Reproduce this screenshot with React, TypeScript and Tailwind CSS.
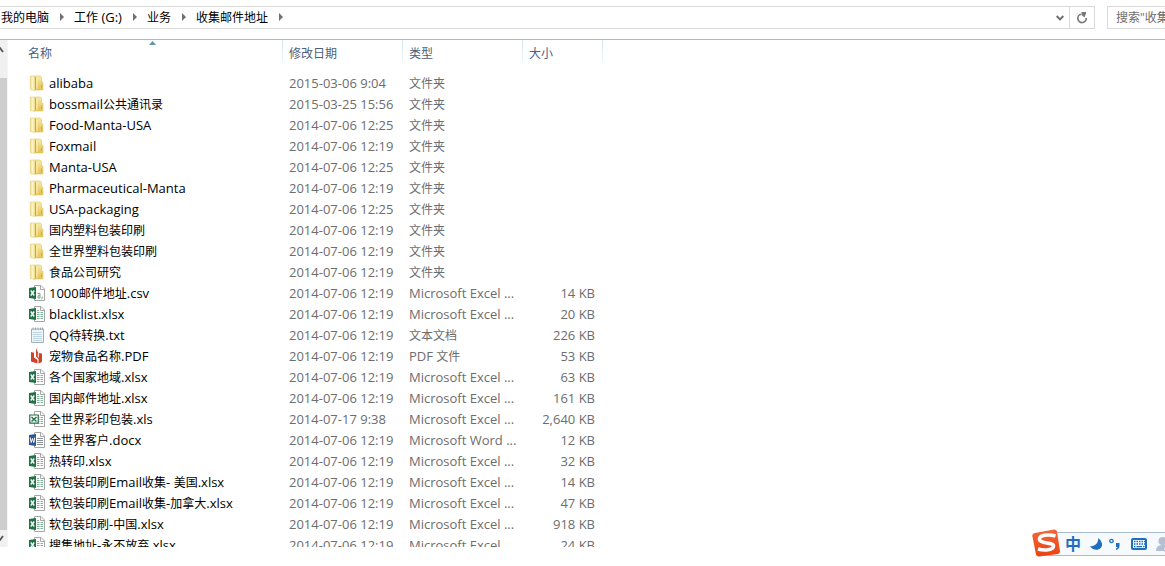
import * as React from 'react'

type Kind = 'folder' | 'csv' | 'xlsx' | 'xls' | 'docx' | 'txt' | 'pdf'

interface Entry {
  name: string
  date: string
  type: string
  size?: string
  kind: Kind
}

const folder = (name: string, date: string): Entry => ({ name, date, type: '文件夹', kind: 'folder' })
const excel = (name: string, size: string, date = '2014-07-06 12:19', kind: Kind = 'xlsx'): Entry => ({
  name,
  date,
  type: 'Microsoft Excel ...',
  size,
  kind,
})

const entries: Entry[] = [
  folder('alibaba', '2015-03-06 9:04'),
  folder('bossmail公共通讯录', '2015-03-25 15:56'),
  folder('Food-Manta-USA', '2014-07-06 12:25'),
  folder('Foxmail', '2014-07-06 12:19'),
  folder('Manta-USA', '2014-07-06 12:25'),
  folder('Pharmaceutical-Manta', '2014-07-06 12:19'),
  folder('USA-packaging', '2014-07-06 12:25'),
  folder('国内塑料包装印刷', '2014-07-06 12:19'),
  folder('全世界塑料包装印刷', '2014-07-06 12:19'),
  folder('食品公司研究', '2014-07-06 12:19'),
  excel('1000邮件地址.csv', '14 KB', '2014-07-06 12:19', 'csv'),
  excel('blacklist.xlsx', '20 KB'),
  { name: 'QQ待转换.txt', date: '2014-07-06 12:19', type: '文本文档', size: '226 KB', kind: 'txt' },
  { name: '宠物食品名称.PDF', date: '2014-07-06 12:19', type: 'PDF 文件', size: '53 KB', kind: 'pdf' },
  excel('各个国家地域.xlsx', '63 KB'),
  excel('国内邮件地址.xlsx', '161 KB'),
  excel('全世界彩印包装.xls', '2,640 KB', '2014-07-17 9:38', 'xls'),
  { name: '全世界客户.docx', date: '2014-07-06 12:19', type: 'Microsoft Word ...', size: '12 KB', kind: 'docx' },
  excel('热转印.xlsx', '32 KB'),
  excel('软包装印刷Email收集- 美国.xlsx', '14 KB'),
  excel('软包装印刷Email收集-加拿大.xlsx', '47 KB'),
  excel('软包装印刷-中国.xlsx', '918 KB'),
  excel('搜集地址-永不放弃.xlsx', '24 KB'),
]

// Chinese runs are set one size smaller than the Latin ones
function Label({ text }: { text: string }) {
  return (
    <>
      {text.split(/([\u4e00-\u9fff]+)/).map((part, i) =>
        i % 2 ? <span key={i} className="text-xs leading-none">{part}</span> : part
      )}
    </>
  )
}

function FileIcon({ kind }: { kind: Kind }) {
  if (kind === 'folder') {
    return (
      <svg width="16" height="16" viewBox="0 0 16 16" className="shrink-0" aria-hidden="true">
        <defs>
          <linearGradient id="folderFront" x1="0" x2="1">
            <stop offset="0" stopColor="#f3dd86" />
            <stop offset=".5" stopColor="#fdf6c4" />
            <stop offset="1" stopColor="#f3df8d" />
          </linearGradient>
          <linearGradient id="folderBack" x1="0" x2="0" y1="0" y2="1">
            <stop offset="0" stopColor="#f8eaa6" />
            <stop offset="1" stopColor="#e3c052" />
          </linearGradient>
        </defs>
        <path d="M6 1h5.500l1 1.500V7H14v8H6z" fill="url(#folderBack)" stroke="#e0c66c" strokeWidth=".6" />
        <path d="M1.300 1H6v14.500L1.300 14.500z" fill="url(#folderFront)" stroke="#e2cb78" strokeWidth=".6" />
        <path d="M6.500 2v12.500" stroke="#c9a94b" strokeWidth="1" />
        <path d="M8 2.500v11.500" stroke="#fbf2bd" strokeWidth="1" />
        <path d="M12.500 9.500v3.500" stroke="#7fb9d6" strokeWidth="1" />
      </svg>
    )
  }
  if (kind === 'txt') {
    return (
      <svg width="16" height="16" viewBox="0 0 16 16" className="shrink-0" aria-hidden="true">
        <path d="M2.500 2h12v13.500h-12z" fill="#eef5fa" stroke="#a3afb8" />
        <path d="M4 5.500h9M4 7.500h9M4 9.500h9M4 11.500h9M4 13.500h9" stroke="#bfd6e4" />
        <path d="M4 .5v2.500M6.500.5v2.500M9 .5v2.500M11.500.5v2.500M13.500.5v2.500" stroke="#90999f" strokeWidth=".8" />
      </svg>
    )
  }
  if (kind === 'pdf') {
    return (
      <svg width="16" height="16" viewBox="0 0 16 16" className="shrink-0" aria-hidden="true">
        <path d="M2 4l3 .8v4.700L8.500 12v3.500L2 13.500z" fill="#d1422b" />
        <path d="M7 0l1.500 3.500L9.500 5l3.500.5V14l-3.500 1.500V11L7 8.500z" fill="#d1422b" />
        <path d="M9.300 5v4.500" stroke="#fff" strokeWidth="1" />
      </svg>
    )
  }
  const word = kind === 'docx'
  const tint = word ? '#2b579a' : '#217346'
  return (
    <svg width="16" height="16" viewBox="0 0 16 16" className="shrink-0" aria-hidden="true">
      <path d="M5.500.5H12L15.500 4v11.500h-10z" fill="#fff" stroke="#a6a6a6" />
      <path d="M11.500.5v4h4" fill="none" stroke="#a6a6a6" />
      {kind === 'csv' ? (
        <path d="M8.500 8.500h2.500v4.500H9v-2.300h2M13.300 11.500V13l-.8 1.200" fill="none" stroke="#5da37c" strokeWidth=".9" />
      ) : word ? (
        <path d="M8 6.500h6M8 8.500h6M8 10.500h6M8 12.500h6" stroke="#8a9099" />
      ) : (
        <path d="M8 4.500h2M8 6.500h2.500M8 8.500h2.500M8 10.500h2.500M8 12.500h2.500M11.500 6.500H14M11.500 8.500H14M11.500 10.500H14M11.500 12.500H14" stroke="#7db594" />
      )}
      {kind === 'xls' ? (
        <>
          <path d="M.8 4h8.400v8.200H.8z" fill="#fff" stroke={tint} strokeWidth="1.200" />
          <path d="M2.500 6l5 4.500M7.500 6l-5 4.500" stroke={tint} strokeWidth="1.500" />
        </>
      ) : (
        <>
          <path d="M0 3l7-1v12l-7-1z" fill={tint} />
          {word ? (
            <path d="M1.200 5.500l1 5 1.300-4 1.300 4 1-5" fill="none" stroke="#fff" />
          ) : (
            <path d="M1.800 5.500l3.400 5M5.200 5.500l-3.400 5" stroke="#fff" strokeWidth="1.400" />
          )}
        </>
      )}
    </svg>
  )
}

function Crumb({ text }: { text: string }) {
  return (
    <li className="flex items-center">
      <a href="#" className="whitespace-nowrap"><Label text={text} /></a>
      <svg width="4" height="8" viewBox="0 0 4 8" className="mr-2.5 ml-[11px]" aria-hidden="true">
        <path d="M0 0l4 4-4 4z" fill="#707070" />
      </svg>
    </li>
  )
}

function AddressBar() {
  return (
    <header className="flex h-10 shrink-0 items-start gap-3 overflow-hidden border-b border-[#b4b7b9] pt-[6px]">
      <div className="flex h-[23px] min-w-0 flex-1 border-y border-r border-[#d9d9d9]">
        <nav className="min-w-0 flex-1" aria-label="地址">
          <ol className="flex h-5 items-center pl-px">
            {['我的电脑', '工作 (G:)', '业务', '收集邮件地址'].map((c) => <Crumb key={c} text={c} />)}
          </ol>
        </nav>
        <button aria-label="以前的位置" className="flex w-[18px] items-center justify-center">
          <svg width="8" height="6" viewBox="0 0 8 6"><path d="M.7 1L4 4.300 7.300 1" fill="none" stroke="#6b6b6b" strokeWidth="1.900" /></svg>
        </button>
        <button aria-label="刷新" className="flex w-[25px] items-center justify-center border-l border-[#d9d9d9]">
          <svg width="12" height="12" viewBox="0 0 12 12">
            <path d="M5 2.300A4.200 4.200 0 1 0 10.200 6" fill="none" stroke="#7a7a7a" strokeWidth="1.700" />
            <path d="M5.500 0H10v1.500L8.500 5.500 5.500 3z" fill="#7a7a7a" />
          </svg>
        </button>
      </div>
      <div className="h-[23px] w-[58px] shrink-0 overflow-hidden border-y border-l border-[#d9d9d9]">
        <input
          type="search"
          aria-label="搜索"
          placeholder={'搜索"收集邮件地址"'}
          className="h-full w-40 pl-2 text-xs outline-none placeholder:text-[#6d6d6d]"
        />
      </div>
    </header>
  )
}

function ScrollBar() {
  return (
    <div className="flex w-[7px] shrink-0 flex-col bg-[#f0f0f0]">
      <div className="flex h-[38px] pt-[7px]">
        <svg width="4" height="6" viewBox="0 0 4 6"><path d="M-3 5l3-4 3 4" fill="none" stroke="#555" strokeWidth="1.800" /></svg>
      </div>
      <div className="flex-1 bg-[#cdcdcd]" />
      <div className="flex h-[17px] pt-[5px]">
        <svg width="4" height="6" viewBox="0 0 4 6"><path d="M-3 1l3 4 3-4" fill="none" stroke="#555" strokeWidth="1.800" /></svg>
      </div>
    </div>
  )
}

function HeadCell({ text, first }: { text: string; first?: boolean }) {
  return (
    <th className="relative h-8 p-0 text-left align-top text-xs font-normal text-[#4c607a]">
      <button className={first ? 'pl-5 leading-7' : 'pl-[6px] leading-7'}>{text}</button>
      {first && (
        <svg width="7" height="4" viewBox="0 0 7 4" className="absolute top-px left-[141px]" aria-hidden="true">
          <path d="M3.500 0L7 4H0z" fill="#5d93b2" />
        </svg>
      )}
      <span className="absolute top-0 right-0 h-[22px] w-px bg-linear-to-b from-[#d3e4f3] to-[#f2f7fb]" />
    </th>
  )
}

function FileTable() {
  return (
    <table className="w-[595px] table-fixed border-collapse">
      <colgroup>
        <col className="w-[275px]" />
        <col className="w-[120px]" />
        <col className="w-[120px]" />
        <col className="w-20" />
      </colgroup>
      <thead>
        <tr>
          <HeadCell text="名称" first />
          <HeadCell text="修改日期" />
          <HeadCell text="类型" />
          <HeadCell text="大小" />
        </tr>
      </thead>
      <tbody className="text-[#6d6d6d]">
        {entries.map((e) => (
          <tr key={e.name} className="h-[21px] whitespace-nowrap">
            <td className="p-0">
              <div className="flex h-[21px] items-center gap-1 pl-[21px] text-black">
                <FileIcon kind={e.kind} />
                <span><Label text={e.name} /></span>
              </div>
            </td>
            <td className="p-0 pl-[6px]">{e.date}</td>
            <td className="p-0 pl-[6px]"><Label text={e.type} /></td>
            <td className="p-0 pr-2 text-right">{e.size}</td>
          </tr>
        ))}
      </tbody>
    </table>
  )
}

// Input method toolbar floating over the window's lower right corner
function ImeBar() {
  return (
    <div className="absolute right-0 bottom-[9px] h-7 w-[133px] overflow-hidden">
      <div className="absolute inset-x-0 top-[3px] left-3 flex h-6 items-center gap-2 border-y border-[#a9bccd] bg-[#f7fafd] pl-[21px] text-[#1f6fc0]">
        <button aria-label="中文输入" className="w-4 text-center text-base leading-5 font-bold">中</button>
        <svg width="92" height="22" viewBox="0 0 92 22" className="shrink-0" aria-hidden="true">
          <path d="M9 5c1 5-3 8-8 8.500 5 6 13 3 12-3Q12 6.500 9 5z" fill="#1f6fc0" />
          <circle cx="22.500" cy="8" r="1.700" fill="none" stroke="#1f6fc0" strokeWidth="1.300" />
          <path d="M27 10h3.500v3q0 3-3.500 4v-1.500q1.500-.5 1.500-1.500H27z" fill="#1f6fc0" />
          <rect x="43" y="6" width="14" height="10" rx="1" fill="none" stroke="#1f6fc0" strokeWidth="2" />
          <path d="M45 8.500h11M45 11h11" stroke="#1f6fc0" strokeWidth="1.300" strokeDasharray="1.500 1" />
          <path d="M45 13.700h1.500M47.500 13.700h5.500M54 13.700h1.500" stroke="#1f6fc0" strokeWidth="1.300" />
          <circle cx="73.500" cy="8" r="4" fill="#b3c0d3" />
          <path d="M67 18q0-6 6-6h8v6z" fill="#b3c0d3" />
          <path d="M75 14h5v4h-5z" fill="#f7fafd" stroke="#b3c0d3" />
        </svg>
      </div>
      <svg width="28" height="28" viewBox="0 0 28 28" className="relative" aria-hidden="true">
        <defs>
          <linearGradient id="ime" x1="0" x2="0" y1="0" y2="1">
            <stop offset="0" stopColor="#f4673a" />
            <stop offset="1" stopColor="#ea4312" />
          </linearGradient>
        </defs>
        <path d="M3 4L22 .5Q24.500.2 25 2.500L28 22q.2 2.500-2 3L7 27.500q-2.500.2-3-2L.3 7Q0 4.500 3 4z" fill="url(#ime)" />
        <path d="M23.500 7C16 5 7 6 7.500 10.500c.5 4.500 14 2.500 14 6.500 0 4-9 5-15.500 3" fill="none" stroke="#fff" strokeWidth="3.600" />
      </svg>
    </div>
  )
}

export default function App() {
  return (
    <div className="relative flex h-screen flex-col overflow-hidden bg-white pb-[19px] font-['Open_Sans','Noto_Sans_CJK_SC',sans-serif] text-[13px] leading-4 text-black">
      <AddressBar />
      <main className="flex min-h-0 flex-1">
        <ScrollBar />
        <div className="min-w-0 flex-1 overflow-hidden border-l border-[#f5f5f5]">
          <FileTable />
        </div>
      </main>
      <ImeBar />
    </div>
  )
}
